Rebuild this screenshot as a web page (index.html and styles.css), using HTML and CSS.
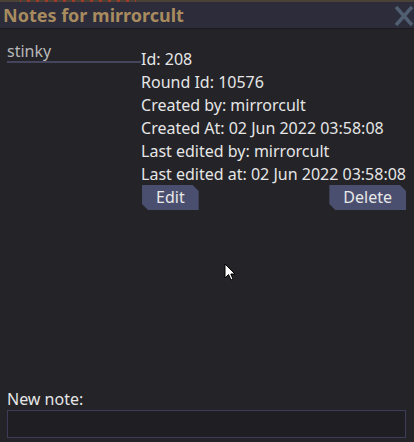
FILE: index.html
```html
<!DOCTYPE html>
<html>
<head>
<meta charset="utf-8">
<link rel="stylesheet" href="styles.css">
</head>
<body>
<div class="window">
  <div class="strip"></div>
  <div class="titlebar">
    <span class="title">Notes for mirrorcult</span>
    <svg class="close" width="20" height="22" viewBox="0 0 20 22"><path d="M2 2 L18 20 M18 2 L2 20" stroke="#4f5e70" stroke-width="3.5" fill="none"/></svg>
  </div>
  <div class="content">
    <div class="main">
      <div class="notes">
        <div class="note">stinky</div>
      </div>
      <div class="details">
        <div class="line">Id: 208</div>
        <div class="line">Round Id: 10576</div>
        <div class="line">Created by: mirrorcult</div>
        <div class="line">Created At: 02 Jun 2022 03:58:08</div>
        <div class="line">Last edited by: mirrorcult</div>
        <div class="line">Last edited at: 02 Jun 2022 03:58:08</div>
        <div class="buttons">
          <div class="btn">Edit</div>
          <div class="btn">Delete</div>
        </div>
      </div>
    </div>
    <div class="newnote">
      <div class="label">New note:</div>
      <div class="input"></div>
    </div>
  </div>
  <svg class="cursor" width="14" height="20" viewBox="0 0 14 20"><path d="M1 1 L1 15 L4.5 11.5 L7 17 L9 16 L6.8 11 L11 11 Z" fill="#fff" stroke="#000" stroke-width="1"/></svg>
</div>
</body>
</html>
```

FILE: styles.css
```css
html, body {
  margin: 0;
  padding: 0;
  background: #232328;
}
.window {
  position: relative;
  width: 414px;
  height: 442px;
  display: flex;
  flex-direction: column;
  background: #232328;
  font-family: "Noto Sans", "Open Sans", sans-serif;
  overflow: hidden;
}
.strip {
  height: 2px;
  background: linear-gradient(90deg, #4a4238 0 20px, transparent 20px 136px, #4a4238 136px),
    repeating-linear-gradient(90deg, #a03a2a 0 3px, #4a4238 3px 9px);
}
.titlebar {
  height: 26px;
  background: #2c2c3b;
  border-bottom: 1px solid #1b1b20;
  display: flex;
  align-items: center;
  justify-content: space-between;
}
.title {
  color: #a88b5e;
  font-weight: bold;
  font-size: 18px;
  padding-left: 3px;
  line-height: 26px;
}
.close {
  margin-top: 2px;
  display: block;
}
.content {
  flex: 1;
  display: flex;
  flex-direction: column;
  padding: 0 8px 4px 7px;
}
.main {
  flex: 1;
  display: flex;
}
.notes {
  width: 135px;
  padding-top: 12px;
}
.note {
  color: #b8b8b8;
  font-size: 16px;
  line-height: 20px;
  border-bottom: 2px solid #45455e;
  height: 20px;
}
.details {
  padding-top: 19px;
  color: #e6e6e6;
  font-size: 16px;
}
.line {
  line-height: 23px;
  white-space: nowrap;
}
.buttons {
  display: flex;
  justify-content: space-between;
  margin-top: -1px;
  margin-left: 1px;
}
.btn {
  background: #4b4f6f;
  color: #e8e8e8;
  font-size: 16px;
  height: 25px;
  line-height: 25px;
  padding: 0 14px;
  clip-path: polygon(0 0, calc(100% - 6px) 0, 100% 6px, 100% 100%, 6px 100%, 0 calc(100% - 6px));
}
.newnote {
  display: flex;
  flex-direction: column;
}
.label {
  color: #e6e6e6;
  font-size: 16px;
  line-height: 21px;
}
.input {
  height: 26px;
  border: 1px solid #3c3c58;
  background: #1e1e23;
}
.cursor {
  position: absolute;
  left: 224px;
  top: 263px;
}
```
